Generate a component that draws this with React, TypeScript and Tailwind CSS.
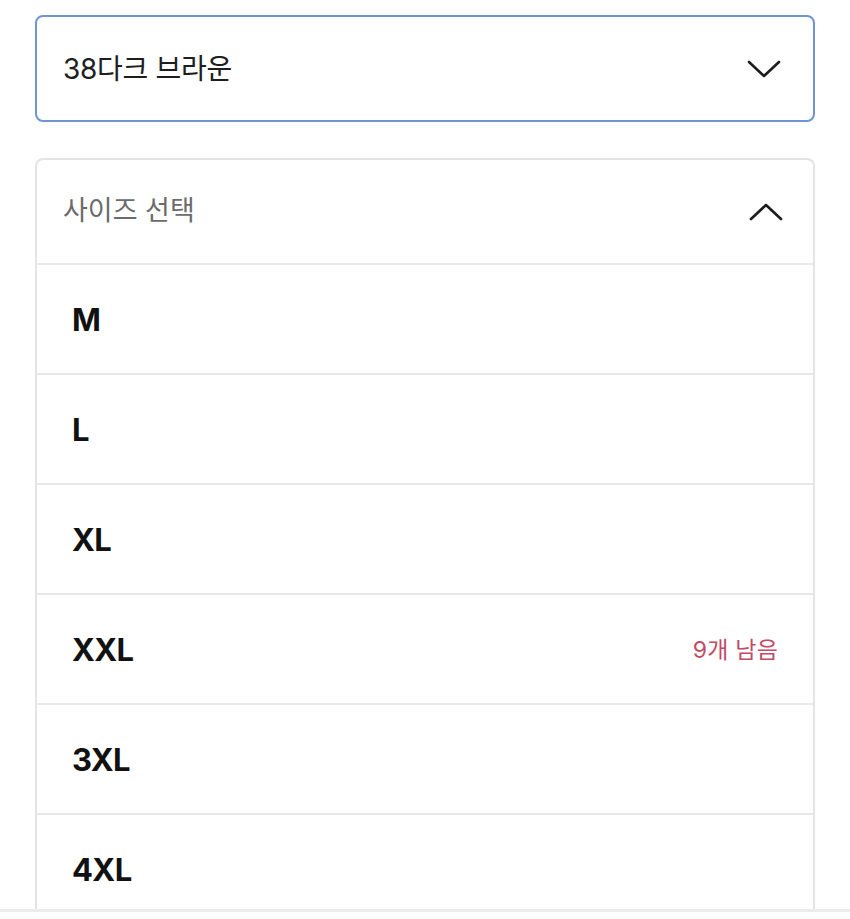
// Option select panel: color dropdown + open size list

const sizes: { label: string; stock?: string }[] = [
  { label: 'M' },
  { label: 'L' },
  { label: 'XL' },
  { label: 'XXL', stock: '9개 남음' },
  { label: '3XL' },
  { label: '4XL' },
]

function Chevron({ up = false }: { up?: boolean }) {
  return (
    <svg width="34" height="18" viewBox="0 0 34 18" fill="none" className="shrink-0">
      <polyline
        points={up ? '2,16 17,2 32,16' : '2,2 17,16 32,2'}
        stroke="#1c1c1c"
        strokeWidth="2.6"
        strokeLinecap="round"
        strokeLinejoin="round"
      />
    </svg>
  )
}

export default function App() {
  return (
    <div
      className="w-[850px] h-[919px] bg-white overflow-hidden flex flex-col"
      style={{ fontFamily: 'Inter, "Noto Sans CJK KR", sans-serif' }}
    >
      <div className="h-[909px] overflow-hidden px-[35px] pt-[15px]">
        {/* Color select */}
        <div className="h-[107px] border-2 border-[#6e94d4] rounded-lg flex items-center justify-between pl-[26px] pr-[32px]">
          <span className="text-[28px] text-[#1e1e1e] tracking-[-0.3px]">38다크 브라운</span>
          <Chevron />
        </div>

        {/* Size list */}
        <div className="mt-[36px] border-2 border-b-0 border-[#e4e4e4] rounded-t-lg">
          <div className="h-[105px] flex items-center justify-between pl-[26px] pr-[30px] border-b-2 border-[#e8e8e8]">
            <span className="text-[27px] text-[#6b6b6b]">사이즈 선택</span>
            <Chevron up />
          </div>
          {sizes.map((s) => (
            <div
              key={s.label}
              className="h-[110px] flex items-center justify-between pl-[35px] pr-[35px] pt-[2px] border-b-2 border-[#e8e8e8]"
            >
              <span className="text-[31px] font-bold text-[#111] tracking-[-0.6px]">{s.label}</span>
              {s.stock && <span className="text-[23px] text-[#c24b66] tracking-[0.2px]">{s.stock}</span>}
            </div>
          ))}
        </div>
      </div>
      <div className="border-t-[3px] border-[#ececec] flex-1 bg-white" />
    </div>
  )
}
